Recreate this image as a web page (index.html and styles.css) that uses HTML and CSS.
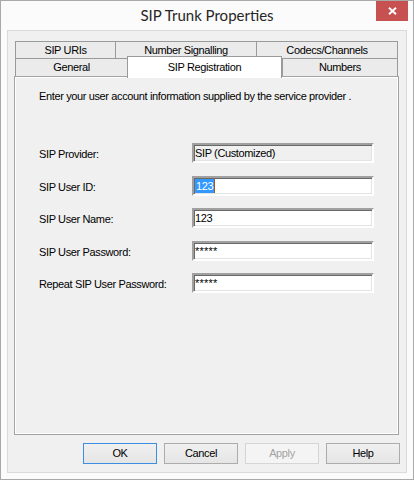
FILE: index.html
```html
<!DOCTYPE html>
<html lang="en">
<head>
<meta charset="utf-8">
<title>SIP Trunk Properties</title>
<link rel="stylesheet" href="styles.css">
</head>
<body>
<div class="window">
  <div class="titlebar">
    <h1 class="title">SIP Trunk Properties</h1>
    <button class="close" type="button" aria-label="Close">
      <svg width="9" height="8" viewBox="0 0 9 8"><path d="M1 0.8L8 7.2M8 0.8L1 7.2" stroke="#fff" stroke-width="1.9" fill="none"/></svg>
    </button>
  </div>
  <div class="client">
    <div class="tabs">
      <div class="tab-row">
        <div class="tab tab-uris">SIP URIs</div>
        <div class="tab tab-signalling">Number Signalling</div>
        <div class="tab tab-codecs">Codecs/Channels</div>
      </div>
      <div class="tab-row tab-row-front">
        <div class="tab tab-general">General</div>
        <div class="tab tab-selected tab-registration">SIP Registration</div>
        <div class="tab tab-numbers">Numbers</div>
      </div>
    </div>
    <div class="panel">
      <p class="intro">Enter your user account information supplied by the service provider .</p>
      <div class="form">
        <label class="label">SIP Provider:</label>
        <div class="field field-disabled">SIP (Customized)</div>
        <label class="label">SIP User ID:</label>
        <div class="field"><span class="selection">123</span><span class="caret"></span></div>
        <label class="label">SIP User Name:</label>
        <div class="field">123</div>
        <label class="label">SIP User Password:</label>
        <div class="field field-secret">*****</div>
        <label class="label">Repeat SIP User Password:</label>
        <div class="field field-secret">*****</div>
      </div>
    </div>
    <div class="buttons">
      <button class="btn btn-default" type="button">OK</button>
      <button class="btn" type="button">Cancel</button>
      <button class="btn" type="button" disabled>Apply</button>
      <button class="btn" type="button">Help</button>
    </div>
  </div>
</div>
</body>
</html>
```
FILE: styles.css
```css
body {
  margin: 0;
  background: #ffffff;
}

.window {
  width: 414px;
  height: 480px;
  box-sizing: border-box;
  border: 1px solid #a9a9a9;
  background: #fbfbfb;
  display: flex;
  flex-direction: column;
  font-family: "Liberation Sans", Arial, sans-serif;
  font-size: 11px;
  letter-spacing: -0.37px;
  color: #000;
}

/* title bar: caption centred over the whole width, close box on the right */
.titlebar {
  height: 29px;
  display: grid;
  grid-template-columns: 1fr auto 1fr;
  align-items: start;
}

.title {
  grid-column: 2;
  margin: 0;
  font: 400 15px/29px Lato, "Noto Sans", sans-serif;
  letter-spacing: normal;
  color: #262626;
  white-space: nowrap;
}

.close {
  grid-column: 3;
  justify-self: end;
  margin-right: 5px;
  width: 32px;
  height: 20px;
  border: 0;
  padding: 0;
  background: #c75050;
  display: flex;
  align-items: center;
  justify-content: center;
}

.close svg {
  display: block;
}

/* dialog client area */
.client {
  flex: 1;
  margin: 0 6px 6px;
  border: 1px solid #dadada;
  background: #f0f0f0;
  padding: 10px 6px 8px;
  display: flex;
  flex-direction: column;
}

/* two rows of tabs */
.tabs {
  margin-left: 1px;
}

.tab-row {
  display: flex;
  height: 18px;
}

.tab-row-front {
  height: 19px;
  margin-top: -1px;
  align-items: flex-end;
}

.tab {
  box-sizing: border-box;
  height: 18px;
  border: 1px solid #9a9a9a;
  background: #ebebeb;
  text-align: center;
  line-height: 16px;
  white-space: nowrap;
}

.tab-row-front .tab {
  height: 19px;
}

.tab + .tab {
  margin-left: -1px;
}

.tab-row-front .tab-selected {
  height: 22px;
  margin-bottom: -1px;
  padding-top: 2px;
  border-bottom: 0;
  background: #ffffff;
  position: relative;
  z-index: 1;
}

.tab-selected + .tab {
  margin-left: 0;
}

.tab-uris { width: 101px; }
.tab-signalling { width: 142px; }
.tab-codecs { width: 142px; }
.tab-general { width: 113px; }
.tab-registration { width: 155px; }
.tab-numbers { width: 116px; }

/* tab page */
.panel {
  flex: 1;
  margin: -1px 1px 0 0;
  border: 1px solid #a3a3a3;
  box-shadow: inset 1px 1px 0 #fff, inset -1px -1px 0 #fff;
  padding: 12px 0 0 24px;
}

.intro {
  margin: 0;
  line-height: 14px;
  white-space: nowrap;
}

.form {
  display: grid;
  grid-template-columns: 153px 182px;
  grid-auto-rows: 20px;
  row-gap: 12.5px;
  margin-top: 40px;
}

.label {
  line-height: 20px;
  padding-top: 1px;
  white-space: nowrap;
}

/* sunken edit boxes */
.field {
  box-sizing: border-box;
  height: 20px;
  border: 2px solid;
  border-color: #a0a0a0 #ffffff #ffffff #a0a0a0;
  box-shadow: inset 1px 1px 0 #696969, inset -1px -1px 0 #e3e3e3;
  background: #ffffff;
  padding: 1px 1px 0;
  line-height: 14px;
  white-space: nowrap;
  overflow: hidden;
}

.field-disabled {
  background: #f0f0f0;
}

.field-secret {
  letter-spacing: 0.2px;
}

.selection {
  display: inline-block;
  vertical-align: top;
  height: 14px;
  padding: 0 1px;
  background: #3399ff;
  color: #ffffff;
}

.caret {
  display: inline-block;
  vertical-align: top;
  width: 1px;
  height: 14px;
  background: #9a5a20;
}

/* command buttons */
.buttons {
  display: flex;
  justify-content: flex-end;
  gap: 7px;
  margin-top: 8px;
}

.btn {
  box-sizing: border-box;
  width: 74px;
  height: 21px;
  padding: 0;
  border: 1px solid #acacac;
  background: linear-gradient(#f0f0f0, #e5e5e5);
  font: inherit;
  letter-spacing: inherit;
  line-height: 19px;
  color: #000;
}

.btn-default {
  border-color: #3d8ee0;
}

.btn:disabled {
  border-color: #d5d5d5;
  background: #f4f4f4;
  color: #a3a3a3;
}
```
